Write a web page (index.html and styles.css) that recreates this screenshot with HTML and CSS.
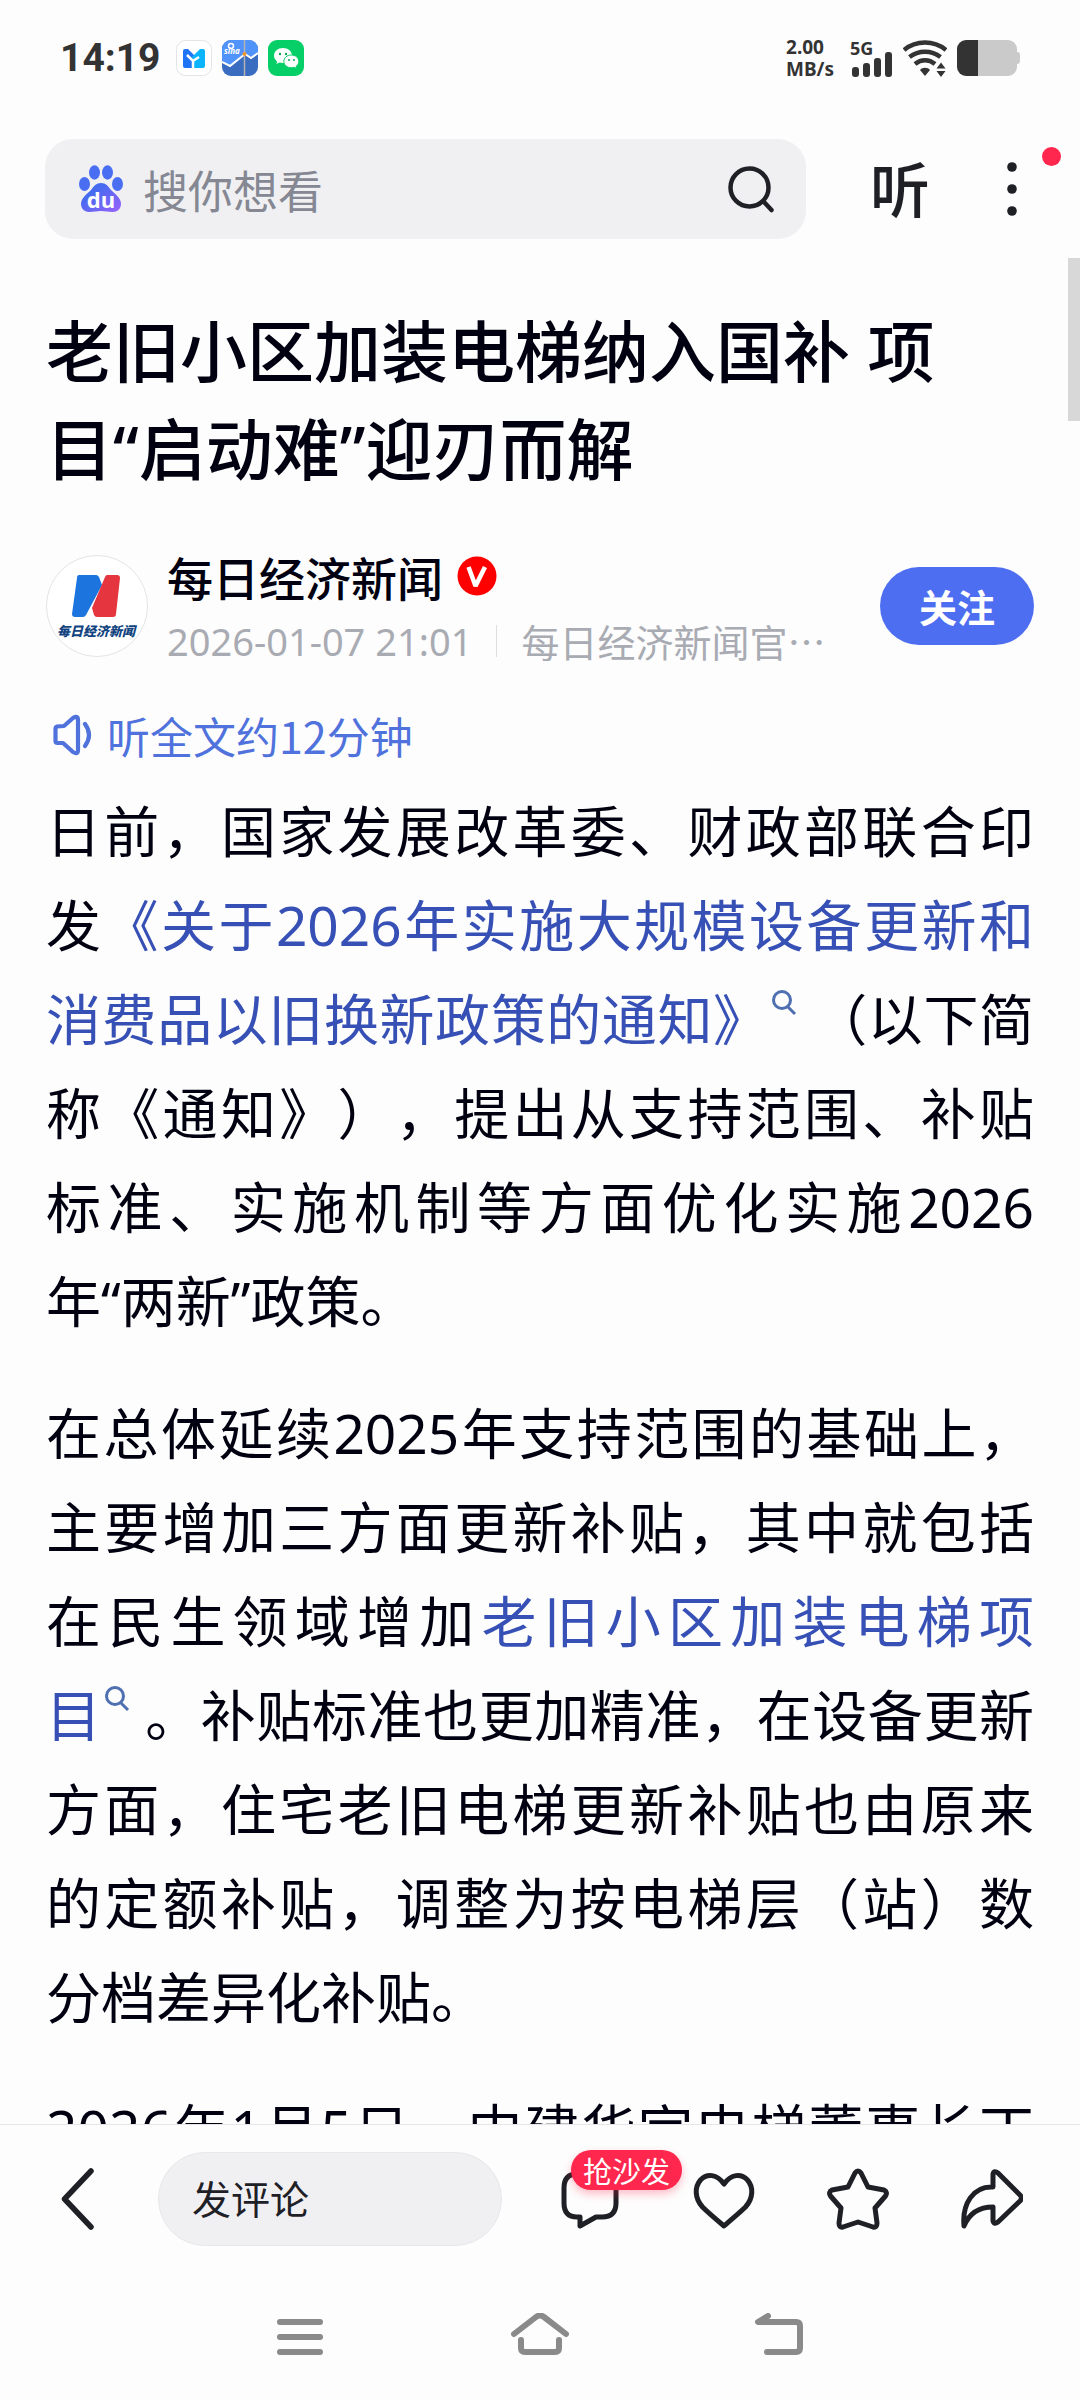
FILE: index.html
```
<!DOCTYPE html>
<html lang="zh-CN">
<head>
  <meta charset="UTF-8" />
  <meta name="viewport" content="width=device-width, initial-scale=1.0"/>
  <title>老旧小区加装电梯纳入国补 项目“启动难”迎刃而解</title>
  <link rel="stylesheet" href="styles.css">
</head>
<body>
  <div class="status-bar">
    <span class="time">14:19</span>
    <div class="apps">
      <svg width="36" height="36" viewBox="0 0 36 36">
        <rect x="0.5" y="0.5" width="35" height="35" rx="9" fill="#fff" stroke="#e2e4e8"/>
        <path d="M7 11q0-2 2-2h3l6 6v13H9q-2 0-2-2z" fill="#1f74f5"/>
        <path d="M29 11q0-2-2-2h-3l-9 9 3 4v6h9q2 0 2-2z" fill="#0cb4fb"/>
        <path d="M11 15l6 6 6-4M17 20v8" fill="none" stroke="#fff" stroke-width="2.500"/>
      </svg>
      <svg width="36" height="36" viewBox="0 0 36 36">
        <rect width="36" height="36" rx="9" fill="#3a6cc0"/>
        <path d="M9 0h18a9 9 0 0 1 9 9v5l-5 4-9-5-14 13-8-5V9a9 9 0 0 1 9-9z" fill="#5093fa"/>
        <path d="M0 22l8 4 15-12 6 4 7-5" fill="none" stroke="#fff" stroke-width="2"/>
        <path d="M22.500 0v36" stroke="#b3b3b3" stroke-width="1.500"/>
        <circle cx="22.500" cy="14" r="2" fill="#f49a2c"/>
        <circle cx="9" cy="6" r="2.500" fill="none" stroke="#fff" stroke-width="1.500"/>
        <text x="2" y="14" class="sina">sina</text>
      </svg>
      <svg width="36" height="36" viewBox="0 0 36 36">
        <rect width="36" height="36" rx="9" fill="#07cf67"/>
        <path d="M15 8c-5 0-9 3.400-9 7.600 0 2.400 1.200 4.400 3.200 5.800L8.400 24l3-1.500c1.100.3 2.300.5 3.600.5 5 0 9-3.200 9-7.400S20 8 15 8z" fill="#fff"/>
        <path d="M23.300 15c-4.200 0-7.500 2.800-7.500 6.400s3.300 6.300 7.500 6.300c1 0 2-.2 2.800-.4l2.600 1.300-.7-2.200c1.800-1.200 2.800-2.900 2.800-5 0-3.600-3.300-6.400-7.500-6.400z" fill="#fff" stroke="#07cf67"/>
        <circle cx="12" cy="14" r="1.200" fill="#07a954"/>
        <circle cx="18" cy="14" r="1.200" fill="#07a954"/>
        <circle cx="21" cy="20" r="1" fill="#07a954"/>
        <circle cx="26" cy="20" r="1" fill="#07a954"/>
      </svg>
    </div>
    <div class="speed">2.00<br>MB/s</div>
    <svg width="43" height="40" viewBox="0 0 43 40" fill="#333">
      <text x="0" y="17" class="net">5G</text>
      <rect x="2" y="29" width="7" height="10" rx="3"/>
      <rect x="13" y="25" width="7" height="14" rx="3"/>
      <rect x="24" y="20" width="7" height="19" rx="3"/>
      <rect x="35" y="14" width="7" height="25" rx="3"/>
    </svg>
    <svg width="44" height="38" viewBox="0 0 44 38" fill="none" stroke="#333" stroke-width="4.500">
      <path d="M1 11C13 1 31 1 43 11M6.500 18c9-7 22-7 31 0M12 25c6-5 14-5 20 0"/>
      <path d="M17 31c2-3 8-3 10 0l-5 6z" fill="#333" stroke="none"/>
      <path d="M33.500 29.500l4.500-6 4.500 6zM33.500 32l4.500 6 4.500-6z" fill="#333" stroke="none"/>
    </svg>
    <svg width="63" height="36" viewBox="0 0 63 36">
      <path d="M9 0h42a9 9 0 0 1 9 9v3c2 0 3 1 3 3v6c0 2-1 3-3 3v3a9 9 0 0 1-9 9H9z" fill="#cacaca"/>
      <path d="M21 0H9a9 9 0 0 0-9 9v18a9 9 0 0 0 9 9h12z" fill="#333"/>
    </svg>
  </div>

  <header>
    <form class="search">
      <svg width="44" height="48" viewBox="0 0 44 48">
        <defs>
          <linearGradient id="paw" x1="0" y1="0" x2="1" y2="1">
            <stop offset="0.300" stop-color="#466bf0"/>
            <stop offset="1" stop-color="#9a62fb"/>
          </linearGradient>
        </defs>
        <g fill="#4a6ef2">
          <ellipse cx="15.500" cy="7.500" rx="5.500" ry="7.200"/>
          <ellipse cx="28.500" cy="7.500" rx="5.500" ry="7.200"/>
          <ellipse cx="5.500" cy="19" rx="5.500" ry="7"/>
          <ellipse cx="38.500" cy="19" rx="5.500" ry="7"/>
        </g>
        <path d="M22 18c5 0 7 3 10 7 4 4 10 8 10 14 0 5-4 8-8 8-5 0-8-1-12-1s-7 1-12 1c-4 0-8-3-8-8 0-6 6-10 10-14 3-4 5-7 10-7z" fill="url(#paw)"/>
        <text x="22" y="43" text-anchor="middle" class="du">du</text>
      </svg>
      <input type="text" placeholder="搜你想看" aria-label="搜索">
      <button type="submit" aria-label="搜索">
        <svg width="48" height="48" viewBox="0 0 48 48" fill="none" stroke="#1f2026" stroke-width="4.500" stroke-linecap="round">
          <circle cx="22.500" cy="22.500" r="19"/>
          <path d="M37 37l7.500 8"/>
        </svg>
      </button>
    </form>
    <button type="button" class="listen">听</button>
    <button type="button" class="more" aria-label="更多">
      <svg width="10" height="56" viewBox="0 0 10 56" fill="#1f2026">
        <circle cx="5" cy="6" r="4.800"/>
        <circle cx="5" cy="28" r="4.800"/>
        <circle cx="5" cy="50" r="4.800"/>
      </svg>
      <span class="dot"></span>
    </button>
  </header>

  <main>
    <div class="scrollbar"></div>
    <h1>老旧小区加装电梯纳入国补 项<span class="keep">目“启动难”</span>迎刃而解</h1>

    <div class="author">
      <svg class="avatar" width="102" height="102" viewBox="0 0 102 102">
        <circle cx="51" cy="51" r="50.500" fill="#fff" stroke="#e4e4e6"/>
        <path d="M33 20h17q2 0 3 2l3 8-16 30q-1 2-3 2h-8q-3 0-3-3l5-36q0-3 2-3z" fill="#1c74df"/>
        <path d="M61 20h10q3 0 3 3l-4 36q0 3-3 3H51q-2 0-3-2l-2-7 13-31q1-2 2-2z" fill="#e5353f"/>
        <text x="50" y="81" text-anchor="middle" class="avatar-text">每日经济新闻</text>
      </svg>
      <div class="author-info">
        <div class="name">
          <span>每日经济新闻</span>
          <svg width="40" height="40" viewBox="0 0 40 40">
            <circle cx="20" cy="20" r="19.500" fill="#fe0000"/>
            <path d="M11.500 11l7 19L28 11" fill="none" stroke="#fff" stroke-width="4.500" stroke-linejoin="bevel"/>
          </svg>
        </div>
        <div class="meta">
          <span class="date">2026-01-07 21:01</span>
          <span class="source">每日经济新闻官…</span>
        </div>
      </div>
      <button type="button" class="follow">关注</button>
    </div>

    <a href="#" class="audio">
      <svg width="40" height="42" viewBox="0 0 40 42" fill="none" stroke="#5072dc" stroke-width="4.200" stroke-linejoin="round" stroke-linecap="round">
        <path d="M4 12.500q-1.500.5-1.500 2.500v12q0 2 2 2h5.500l10 9q5 3 5-2V6q0-5-5-2l-9 8z"/>
        <path d="M32 10q8 11 0 22"/>
      </svg>
      <span>听全文约12分钟</span>
    </a>

    <article>
      <p>日前，国家发展改革委、财政部联合印发<a href="#">《关于2026年实施大规模设备更新和消费品以旧换新政策的通知》<svg class="lens" width="43" height="26" viewBox="0 0 43 26"><circle cx="13" cy="10" r="8.500"/><path d="M19 17l7 7"/></svg></a>（以下简称《通知》），提出从支持范围、补贴标准、实施机制等方面优化实施2026<span class="keep">年“两新”政策。</span></p>
      <p>在总体延续2025年支持范围的基础上，主要增加三方面更新补贴，其中就包括在民生领域增加<a href="#">老旧小区加装电梯项</a><span class="keep"><a href="#">目<svg class="lens" width="43" height="26" viewBox="0 0 43 26"><circle cx="13" cy="10" r="8.500"/><path d="M19 17l7 7"/></svg></a>。</span>补贴标准也更加精准，在设备更新方面，住宅老旧电梯更新补贴也由原来的定额补贴，调整为按电梯层（站）数分档差异化补贴。</p>
      <p class="cut">2026年1月5日，中建华宇电梯董事长丁</p>
    </article>
  </main>

  <footer>
    <button type="button" class="back" aria-label="返回">
      <svg width="34" height="62" viewBox="0 0 34 62" fill="none" stroke="#1f2026" stroke-width="5.500" stroke-linecap="round" stroke-linejoin="round">
        <path d="M30 3L3.500 31 30 59"/>
      </svg>
    </button>
    <input type="text" class="comment" placeholder="发评论" aria-label="发评论">
    <div class="actions">
      <button type="button" aria-label="评论">
        <svg width="62" height="62" viewBox="0 0 62 62">
          <path d="M18 6h25q14 0 14 14v15q0 14-14 14h-6l-16 9v-9h-3Q5 49 5 35V20Q5 6 18 6z"/>
        </svg>
        <span class="badge">抢沙发</span>
      </button>
      <button type="button" aria-label="喜欢">
        <svg width="62" height="62" viewBox="0 0 62 62">
          <path d="M31 16C24 6 14 5 7.500 12c-6 7-6 18 2 27 5 5 12 11 21.500 19C40 50 47.500 44 52.500 39c8-9 8-20 2-27C48 5 38 6 31 16z"/>
        </svg>
      </button>
      <button type="button" aria-label="收藏">
        <svg width="62" height="62" viewBox="0 0 62 62">
          <path d="M28 5q3-4 6 0l7 14 16 3q4 2 1.500 6L48 40l2 15q0 5-4 4l-15-5-15 5q-4 1-4-4l2-15L3.500 28Q1 24 5 22l16-3z"/>
        </svg>
      </button>
      <button type="button" aria-label="分享">
        <svg width="62" height="62" viewBox="0 0 62 62">
          <path d="M32 6q1-4 5-1l22 22q3 3 0 6L37 54q-4 3-5-1V39C17 39 8 46 3 58 1 36 12 18 32 19z"/>
        </svg>
      </button>
    </div>
  </footer>

  <nav>
    <button type="button" aria-label="菜单">
      <svg width="58" height="48" viewBox="0 0 58 48">
        <path d="M9 9h40M9 24h40M9 39h40"/>
      </svg>
    </button>
    <button type="button" aria-label="主页">
      <svg width="58" height="48" viewBox="0 0 58 48">
        <path d="M3 21L25 4q4-3 8 0l22 17M10 27v8q0 4 4 4h30q4 0 4-4v-8"/>
      </svg>
    </button>
    <button type="button" aria-label="返回上一页">
      <svg width="58" height="48" viewBox="0 0 58 48">
        <path d="M17 3L7 9h38q4 0 4 4v22q0 4-4 4H16"/>
      </svg>
    </button>
  </nav>
</body>
</html>
```
FILE: styles.css
```
* {
  margin: 0;
  padding: 0;
  box-sizing: border-box;
}
body {
  display: flex;
  flex-direction: column;
  height: 100vh;
  overflow: hidden;
  background: #fdfdfd;
  color: #000010;
  font-family: "Noto Sans CJK SC", sans-serif;
}
button, input {
  font-family: inherit;
  border: none;
  background: none;
  outline: none;
}
button {
  cursor: pointer;
}
a {
  color: #3650b5;
  text-decoration: none;
}
svg {
  display: block;
  flex-shrink: 0;
}

/* status bar */
.status-bar {
  display: flex;
  align-items: center;
  height: 116px;
  padding: 0 60px;
  color: #333;
}
.time {
  font: 700 39px/50px Roboto, sans-serif;
}
.apps {
  display: flex;
  gap: 10px;
  margin-left: 15px;
}
.sina {
  font: italic 700 8px "Noto Sans", sans-serif;
  fill: #fff;
}
.speed {
  margin-left: auto;
  font: 700 19px/22px "Noto Sans", sans-serif;
}
.net {
  font: 700 18px "Noto Sans", sans-serif;
}
.status-bar > svg {
  margin-left: 10px;
}
.speed + svg {
  margin-left: 16px;
}

/* header */
header {
  display: flex;
  align-items: center;
  padding: 23px 63px 0 45px;
}
.search {
  flex: 1;
  display: flex;
  align-items: center;
  height: 100px;
  padding: 0 31px 0 34px;
  border-radius: 28px;
  background: #f0f0f3;
}
.search input {
  flex: 1;
  min-width: 0;
  margin-left: 20px;
  font-size: 45px;
}
.search input::placeholder {
  color: #858893;
}
.du {
  font: 700 22px "Open Sans", sans-serif;
  fill: #fff;
}
.listen {
  margin-left: 64px;
  padding-bottom: 4px;
  font-size: 60px;
  font-weight: 500;
  line-height: 80px;
  color: #1f2026;
}
.more {
  position: relative;
  margin-left: 77px;
}
.dot {
  position: absolute;
  top: -14px;
  left: 35px;
  width: 19px;
  height: 19px;
  border-radius: 50%;
  background: #ff274d;
}

/* article */
main {
  position: relative;
  flex: 1;
  min-height: 0;
  overflow: hidden;
  padding: 63px 46px 0;
}
.scrollbar {
  position: absolute;
  top: 19px;
  right: 0;
  width: 12px;
  height: 163px;
  background: #d8d8d9;
}
h1 {
  font-family: "Noto Sans", "Noto Sans CJK SC", sans-serif;
  font-size: 67px;
  font-weight: 500;
  line-height: 98px;
}
.author {
  display: flex;
  align-items: center;
  margin-top: 43px;
}
.avatar-text {
  font: italic 900 13px "Noto Sans CJK SC", sans-serif;
  fill: #12447f;
}
.author-info {
  flex: 1;
  margin-left: 19px;
}
.name {
  display: flex;
  align-items: center;
  gap: 14px;
  font-size: 46px;
  font-weight: 500;
  line-height: 70px;
}
.meta {
  display: flex;
  align-items: center;
  font-size: 38px;
  line-height: 60px;
  color: #a9abb3;
}
.date {
  font-family: "Noto Sans", sans-serif;
}
.source {
  margin-left: 24px;
  padding-left: 24px;
  line-height: 32px;
  border-left: 1px solid #dedee2;
}
.follow {
  width: 154px;
  height: 78px;
  border-radius: 39px;
  background: #4e6ef2;
  color: #fff;
  font-size: 38px;
  font-weight: 700;
  line-height: 76px;
}
.audio {
  display: flex;
  align-items: center;
  gap: 14px;
  margin-top: 32px;
  padding-left: 7px;
  font-size: 43px;
  line-height: 64px;
  color: #5072dc;
}
article {
  margin-top: 17px;
}
p {
  margin-bottom: 38px;
  font-family: "Noto Sans", "Noto Sans CJK SC", sans-serif;
  font-size: 55px;
  line-height: 94px;
  text-align: justify;
  text-spacing-trim: space-all;
}
.keep {
  white-space: nowrap;
}
.lens {
  display: inline-block;
  vertical-align: 24px;
  fill: none;
  stroke: #4e6fb0;
  stroke-width: 3;
}
.cut {
  text-align-last: justify;
}

/* bottom bar */
footer {
  display: flex;
  align-items: center;
  height: 148px;
  padding: 0 57px 0 61px;
  border-top: 1px solid #e6e6e8;
  background: #fdfdfd;
}
.comment {
  flex: 1;
  min-width: 0;
  height: 94px;
  margin-left: 63px;
  padding: 0 33px 4px;
  border: 1px solid #e8e8eb;
  border-radius: 47px;
  background: #f0f0f3;
  font-size: 39px;
}
.comment::placeholder {
  color: #1f2026;
}
.actions {
  display: flex;
  gap: 72px;
  margin-left: 57px;
}
.actions button {
  position: relative;
}
.actions svg {
  fill: none;
  stroke: #1f2026;
  stroke-width: 5;
  stroke-linejoin: round;
}
.badge {
  position: absolute;
  top: -18px;
  left: 12px;
  padding: 0 12px;
  border-radius: 20px;
  background: #ff274d;
  box-shadow: 0 4px 8px rgba(255, 39, 77, 0.3);
  color: #fff;
  font-size: 29px;
  line-height: 40px;
  white-space: nowrap;
}

/* system navigation */
nav {
  display: flex;
  justify-content: center;
  gap: 182px;
  height: 128px;
  padding-top: 39px;
}
nav button {
  height: 52px;
}
nav svg {
  fill: none;
  stroke: #8a8a8a;
  stroke-width: 6;
  stroke-linecap: round;
  stroke-linejoin: round;
}
```
